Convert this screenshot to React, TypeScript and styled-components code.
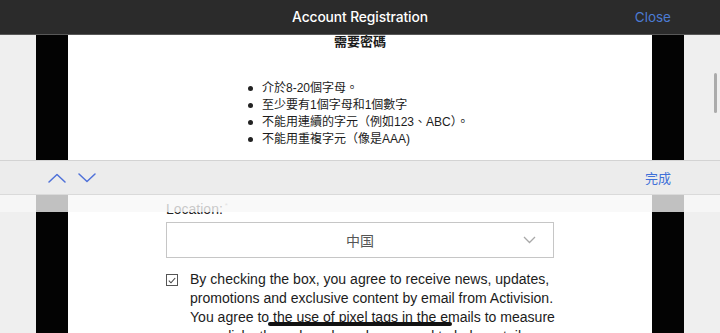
import React from 'react'
import styled, { createGlobalStyle } from 'styled-components'

const GlobalStyle = createGlobalStyle`
  html, body {
    margin: 0;
    padding: 0;
  }
  body {
    width: 720px;
    height: 333px;
    overflow: hidden;
    background: #efefef;
  }
  * {
    box-sizing: border-box;
  }
`

const Screen = styled.div`
  position: relative;
  width: 720px;
  height: 333px;
  overflow: hidden;
  display: flex;
  flex-direction: column;
  font-family: "Liberation Sans", Arial, "Noto Sans CJK TC", sans-serif;
`

const NavBar = styled.header`
  flex: 0 0 35px;
  display: grid;
  grid-template-columns: 1fr auto 1fr;
  align-items: center;
  padding: 0 49px;
  background: #2b2b2b;
  border-bottom: 1px solid #585858;
  font-family: Inter, "Noto Sans", sans-serif;
`

const NavTitle = styled.div`
  grid-column: 2;
  color: #fff;
  font-size: 13.8px;
  font-weight: 500;
  letter-spacing: -0.1px;
`

const NavAction = styled.div`
  justify-self: end;
  color: #4b7bd3;
  font-size: 13.5px;
`

const Viewport = styled.div`
  flex: 1;
  display: flex;
  min-height: 0;
`

const Gutter = styled.div`
  flex: 0 0 36px;
  display: flex;
  justify-content: flex-end;
  padding: 38px 3px 0 0;
  background: #efefef;
`

const ScrollThumb = styled.div`
  width: 3px;
  height: 40px;
  border-radius: 2px;
  background: #ababab;
`

const Bezel = styled.div`
  flex: 0 0 32px;
  background: #030303;
`

const Page = styled.div`
  flex: 1;
  display: flex;
  justify-content: center;
  overflow: hidden;
  background: #fff;
`

const Column = styled.div`
  width: 388px;
  display: flex;
  flex-direction: column;
  color: #1c1c1c;

  & > * {
    flex-shrink: 0;
  }
`

const RuleTitle = styled.div`
  font-size: 13px;
  font-weight: 700;
  line-height: 14px;
  text-align: center;
`

const RuleList = styled.ul`
  margin: 31px 0 0;
  padding: 0 0 0 82px;
  list-style: none;
`

const Rule = styled.li`
  display: flex;
  align-items: center;
  gap: 9px;
  font-size: 12px;
  line-height: 17px;
`

const Dot = styled.span`
  flex: 0 0 5px;
  width: 5px;
  height: 5px;
  border-radius: 50%;
  background: #222;
`

const FieldLabel = styled.label`
  margin-top: 50px;
  font-size: 14px;
  line-height: 16px;
  color: #222;
`

const Required = styled.sup`
  margin-left: 2px;
  font-size: 8px;
  color: #999;
  vertical-align: 6px;
`

const SelectBox = styled.div`
  height: 36px;
  margin-top: 5px;
  display: grid;
  grid-template-columns: 1fr 1fr 1fr;
  align-items: center;
  border: 1px solid #c6c6c6;
  font-size: 14px;
  color: #555;
`

const SelectValue = styled.span`
  grid-column: 2;
  text-align: center;
`

const SelectArrow = styled.span`
  justify-self: end;
  display: flex;
  padding-right: 17px;
`

const ConsentRow = styled.div`
  margin-top: 12px;
  display: flex;
  gap: 12px;
`

const Checkbox = styled.span`
  flex: 0 0 12px;
  height: 12px;
  margin-top: 4px;
  display: flex;
  align-items: center;
  justify-content: center;
  border: 1px solid #555;
`

const ConsentText = styled.p`
  margin: 0;
  font-size: 14.05px;
  line-height: 19px;
  white-space: nowrap;
  color: #1c1c1c;
`

const AccessoryBar = styled.div`
  position: absolute;
  top: 160px;
  left: 0;
  right: 0;
  display: flex;
  flex-direction: column;
`

const Toolbar = styled.div`
  height: 35px;
  display: flex;
  align-items: center;
  padding: 0 49px 0 48px;
  background: #ececec;
  border-top: 1px solid #d3d3d3;
  border-bottom: 1px solid #dadada;
`

const NavArrows = styled.div`
  display: flex;
  gap: 12px;
  flex: 1;
`

const Done = styled.span`
  font-size: 13px;
  color: #4070d8;
`

const Fade = styled.div`
  height: 17px;
  background: rgba(247, 247, 247, 0.78);
`

const HomeIndicator = styled.div`
  position: absolute;
  left: 268px;
  bottom: 7px;
  width: 184px;
  height: 4px;
  border-radius: 2px;
  background: #111;
`

const Chevron = ({ up }: { up?: boolean }) => (
  <svg width="18" height="10" viewBox="0 0 18 10" fill="none">
    <path
      d={up ? 'M1 9 L9 1.5 L17 9' : 'M1 1 L9 8.5 L17 1'}
      stroke="#4f71d9"
      strokeWidth="1.5"
      strokeLinecap="round"
      strokeLinejoin="round"
    />
  </svg>
)

const rules = [
  '介於8-20個字母。',
  '至少要有1個字母和1個數字',
  '不能用連續的字元（例如123、ABC）。',
  '不能用重複字元（像是AAA)',
]

const App = () => {
  return (
    <Screen>
      <GlobalStyle />
      <NavBar>
        <NavTitle>Account Registration</NavTitle>
        <NavAction>Close</NavAction>
      </NavBar>
      <Viewport>
        <Gutter />
        <Bezel />
        <Page>
          <Column>
            <RuleTitle>需要密碼</RuleTitle>
            <RuleList>
              {rules.map((r) => (
                <Rule key={r}>
                  <Dot />
                  {r}
                </Rule>
              ))}
            </RuleList>
            <FieldLabel>
              Location:<Required>*</Required>
            </FieldLabel>
            <SelectBox>
              <SelectValue>中国</SelectValue>
              <SelectArrow>
                <svg width="13" height="8" viewBox="0 0 13 8" fill="none">
                  <path d="M1 1 L6.5 6.5 L12 1" stroke="#a8a8a8" strokeWidth="1.3" />
                </svg>
              </SelectArrow>
            </SelectBox>
            <ConsentRow>
              <Checkbox>
                <svg width="8" height="7" viewBox="0 0 8 7" fill="none">
                  <path d="M0.8 3.6 L3 5.8 L7.2 1" stroke="#444" strokeWidth="1.1" />
                </svg>
              </Checkbox>
              <ConsentText>
                By checking the box, you agree to receive news, updates,
                <br />
                promotions and exclusive content by email from Activision.
                <br />
                You agree to the use of pixel tags in the emails to measure
                <br />
                your clicks through and purchases, and to help us tailor
              </ConsentText>
            </ConsentRow>
          </Column>
        </Page>
        <Bezel />
        <Gutter>
          <ScrollThumb />
        </Gutter>
      </Viewport>
      <AccessoryBar>
        <Toolbar>
          <NavArrows>
            <Chevron up />
            <Chevron />
          </NavArrows>
          <Done>完成</Done>
        </Toolbar>
        <Fade />
      </AccessoryBar>
      <HomeIndicator />
    </Screen>
  )
}

export default App
